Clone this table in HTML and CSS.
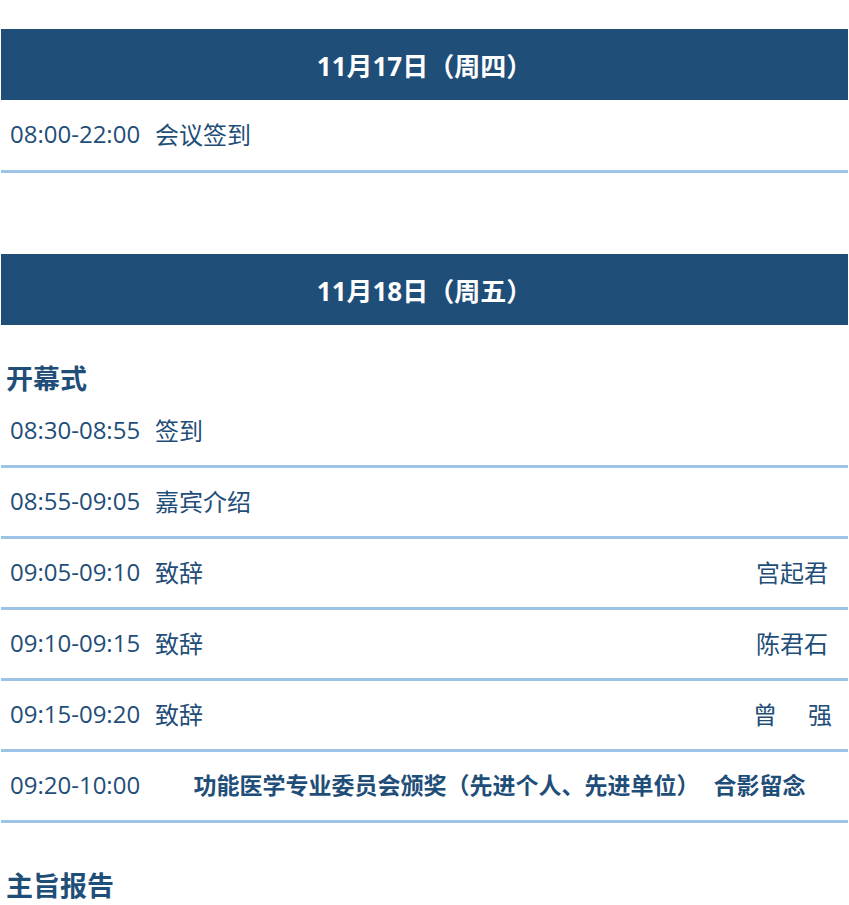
FILE: index.html
```html
<!DOCTYPE html>
<html lang="zh-CN">
<head>
<meta charset="utf-8">
<title>日程</title>
<link rel="stylesheet" href="styles.css">
</head>
<body>
<div class="page">
  <section class="day">
    <div class="day-head">11月17日（周四）</div>
    <div class="row row-first">
      <div class="time">08:00-22:00</div>
      <div class="topic">会议签到</div>
    </div>
  </section>

  <section class="day day-second">
    <div class="day-head">11月18日（周五）</div>
    <h2 class="session">开幕式</h2>
    <div class="row">
      <div class="time">08:30-08:55</div>
      <div class="topic">签到</div>
    </div>
    <div class="row">
      <div class="time">08:55-09:05</div>
      <div class="topic">嘉宾介绍</div>
    </div>
    <div class="row">
      <div class="time">09:05-09:10</div>
      <div class="topic">致辞</div>
      <div class="speaker">宫起君</div>
    </div>
    <div class="row">
      <div class="time">09:10-09:15</div>
      <div class="topic">致辞</div>
      <div class="speaker">陈君石</div>
    </div>
    <div class="row">
      <div class="time">09:15-09:20</div>
      <div class="topic">致辞</div>
      <div class="speaker speaker-split"><span>曾</span><span>强</span></div>
    </div>
    <div class="row">
      <div class="time">09:20-10:00</div>
      <div class="topic topic-center">功能医学专业委员会颁奖（先进个人、先进单位）<span class="spacer"></span>合影留念</div>
    </div>
    <h2 class="session session-second">主旨报告</h2>
  </section>
</div>
</body>
</html>
```

FILE: styles.css
```css
html, body {
  margin: 0;
  padding: 0;
  background: #ffffff;
}

body {
  font-family: "Open Sans", "Noto Sans CJK SC", sans-serif;
  color: #1f4e79;
  width: 849px;
  overflow: hidden;
}

.page {
  padding: 29px 1px 0 1px;
}

.day-second {
  margin-top: 81px;
}

.day-head {
  height: 71px;
  background: #1f4e79;
  color: #ffffff;
  font-weight: 700;
  font-size: 26px;
  display: flex;
  align-items: center;
  justify-content: center;
}

.row {
  display: flex;
  align-items: center;
  height: 64px;
  padding-bottom: 4px;
  border-bottom: 3px solid #9dc3e6;
  font-size: 24px;
}

.row-first {
  height: 66px;
}

.time {
  flex: 0 0 auto;
  width: 140px;
  padding-left: 9px;
  box-sizing: border-box;
  white-space: nowrap;
}

.topic {
  padding-left: 14px;
  white-space: nowrap;
}

.topic-center {
  flex: 1;
  padding-left: 10px;
  text-align: center;
  font-weight: 700;
  font-size: 23px;
}

.spacer {
  display: inline-block;
  width: 14px;
}

.speaker {
  margin-left: auto;
  padding-right: 20px;
}

.speaker-split {
  display: flex;
  gap: 31px;
  padding-right: 16px;
}

.session {
  margin: 0;
  padding-top: 37px;
  padding-bottom: 2px;
  height: 33px;
  line-height: 33px;
  font-size: 27px;
  font-weight: 700;
  padding-left: 5px;
}

.session-second {
  padding-top: 46px;
}
```
